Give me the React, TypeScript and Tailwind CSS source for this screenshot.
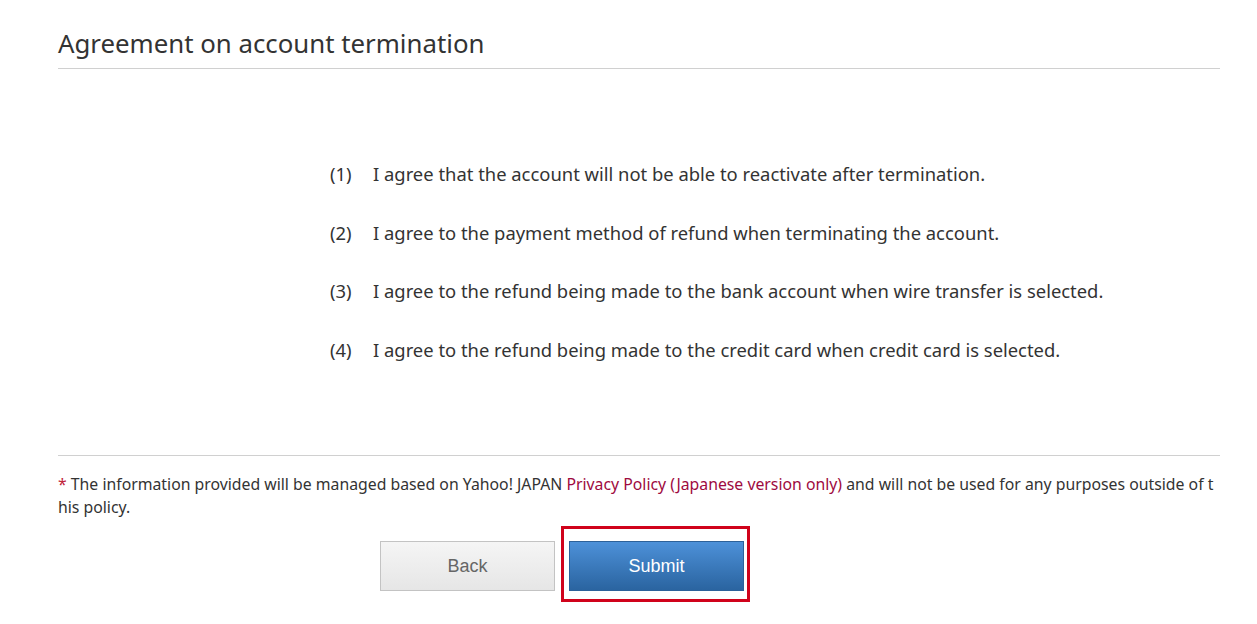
import React from 'react';

const items = [
  'I agree that the account will not be able to reactivate after termination.',
  'I agree to the payment method of refund when terminating the account.',
  'I agree to the refund being made to the bank account when wire transfer is selected.',
  'I agree to the refund being made to the credit card when credit card is selected.',
];

export default function App() {
  return (
    <div className="min-h-[624px] bg-white pl-[58px] pr-[37px] pt-[26px] text-[#333] font-['Noto_Sans','DejaVu_Sans',sans-serif]">
      <h1 className="text-[25.8px] leading-[34px] pb-[8px] border-b border-[#d0d0d0] text-[#333]">
        Agreement on account termination
      </h1>

      <ol className="ml-[272px] pt-[92px] pb-[92px] flex flex-col gap-[32.7px]">
        {items.map((t, i) => (
          <li key={i} className="flex text-[18.4px] leading-[26px]">
            <span className="w-[43px] shrink-0">({i + 1})</span>
            <span>{t}</span>
          </li>
        ))}
      </ol>

      <p className="border-t border-[#d0d0d0] pt-[17px] text-[15.8px] leading-[23px] break-all">
        <span className="text-[#c0233b]">*</span> The information provided will be managed based on Yahoo! JAPAN{' '}
        <a className="text-[#9e0a40]">Privacy Policy (Japanese version only)</a> and will not be used for any
        purposes outside of this policy.
      </p>

      <div className="flex items-start ml-[322px] mt-[7px] gap-[6px]">
        <button className="mt-[15px] w-[175px] h-[50px] border border-[#c3c3c3] bg-gradient-to-b from-[#f5f5f5] to-[#e6e6e6] text-[#666] text-[18px] font-['Liberation_Sans',sans-serif]">
          Back
        </button>
        <div className="border-[3px] border-[#d0021b] pl-[5px] pr-[3px] pt-[12px] pb-[8px]">
          <button className="w-[175px] h-[50px] border border-[#2d6199] bg-gradient-to-b from-[#4d91d9] to-[#2a64a0] text-white text-[18px] font-['Liberation_Sans',sans-serif]">
            Submit
          </button>
        </div>
      </div>
    </div>
  );
}
